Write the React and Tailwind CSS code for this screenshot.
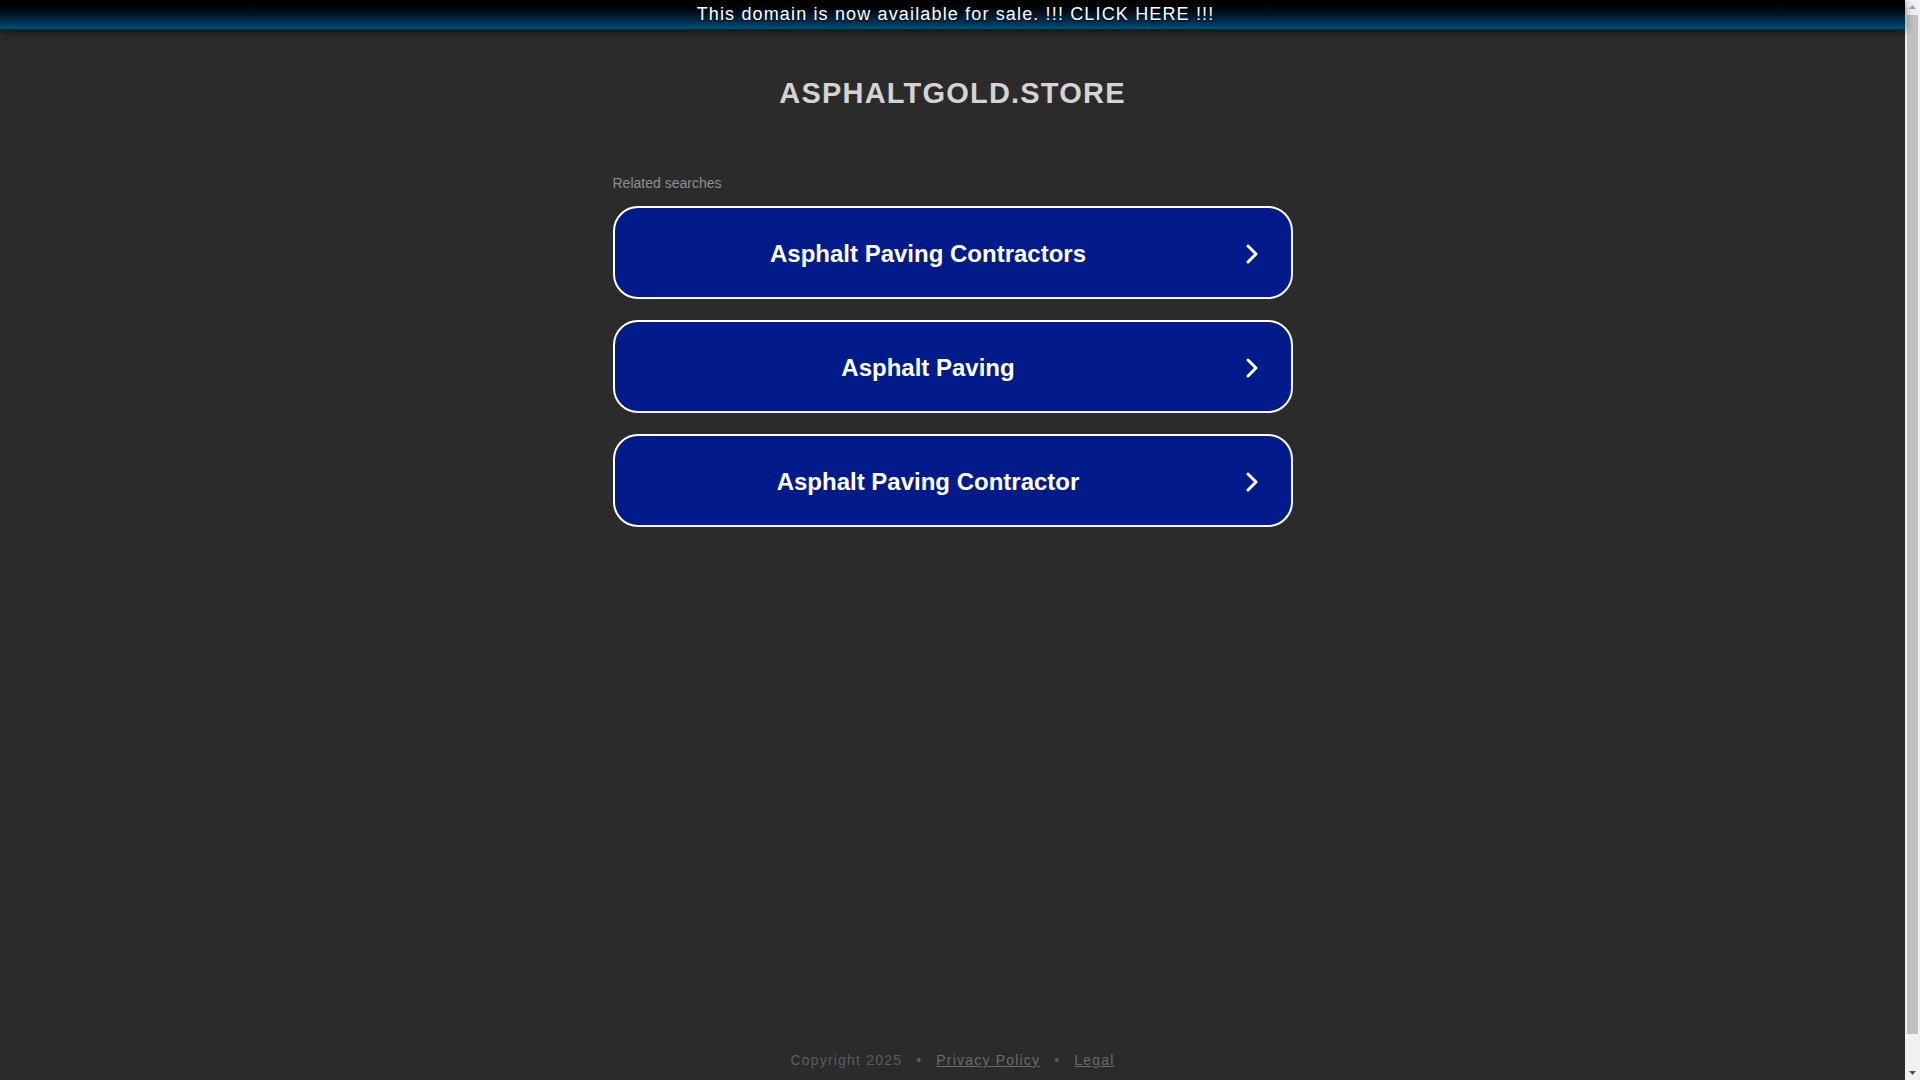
const SEARCHES = ['Asphalt Paving Contractors', 'Asphalt Paving', 'Asphalt Paving Contractor']

function Chevron() {
  return (
    <svg width="12" height="20" viewBox="0 0 12 20" fill="none" className="shrink-0">
      <polyline points="2,2 10,10 2,18" stroke="#ffffff" strokeWidth="3" strokeLinecap="round" strokeLinejoin="round" />
    </svg>
  )
}

function SearchLink({ label }) {
  return (
    <a href="#"
      className="flex items-center h-[93px] rounded-[25px] border-2 border-white bg-[#021a8a] text-white no-underline">
      <span className="flex-1 text-center text-[24px] font-bold leading-[28px] pt-[2px]">{label}</span>
      <span className="ml-[4px] mr-[33px] pt-[2px] flex items-center"><Chevron /></span>
    </a>
  )
}

// the browser's scrollbar, as seen in the shot
function Scrollbar() {
  return (
    <div className="w-[15px] shrink-0 bg-[#f1f1f1] flex flex-col items-center">
      <svg width="15" height="15" viewBox="0 0 15 15" className="shrink-0">
        <polygon points="4,9 11,9 7.5,5" fill="#a3a3a3" />
      </svg>
      <div className="w-[11px] h-[1019px] bg-[#c1c1c1]" />
      <div className="flex-1" />
      <svg width="15" height="15" viewBox="0 0 15 15" className="shrink-0">
        <polygon points="4,6 11,6 7.5,10" fill="#505050" />
      </svg>
    </div>
  )
}

export default function App() {
  return (
    <div className="h-screen flex overflow-hidden bg-[#2b2b2b] font-['Liberation_Sans',Arial,sans-serif]">
      <div className="flex-1 min-h-[1113px] flex flex-col">
        <div className="relative z-10 h-[29px] bg-linear-to-b from-black to-[#024b77] shadow-[0_3px_8px_rgba(0,0,0,0.55)] flex items-center justify-center pl-[6px]">
          <a href="#" className="text-white text-[18px] leading-[29px] tracking-[1.15px] [text-shadow:0_1px_2px_rgba(0,0,0,0.8)]">
            This domain is now available for sale. !!! CLICK HERE !!!
          </a>
        </div>

        <div className="w-[680px] mx-auto">
          <h1 className="mt-[48px] text-center text-[29px] leading-[33px] font-bold tracking-[1.2px] text-[#d4d4d4]">
            ASPHALTGOLD.STORE
          </h1>
          <p className="mt-[65px] text-[14px] leading-[17px] text-[#8f8f8f]">Related searches</p>
          <div className="mt-[14px] flex flex-col gap-[21px]">
            {SEARCHES.map((s) => (
              <SearchLink key={s} label={s} />
            ))}
          </div>
        </div>

        <footer className="mt-auto pb-[45px] flex justify-center items-center gap-[14px] text-[14px] leading-[16px] tracking-[1.2px] text-[#5c5c5c]">
          <span>Copyright 2025</span>
          <span>•</span>
          <a href="#" className="underline text-[#6a6a6a]">Privacy Policy</a>
          <span>•</span>
          <a href="#" className="underline text-[#6a6a6a]">Legal</a>
        </footer>
      </div>
      <Scrollbar />
    </div>
  )
}
